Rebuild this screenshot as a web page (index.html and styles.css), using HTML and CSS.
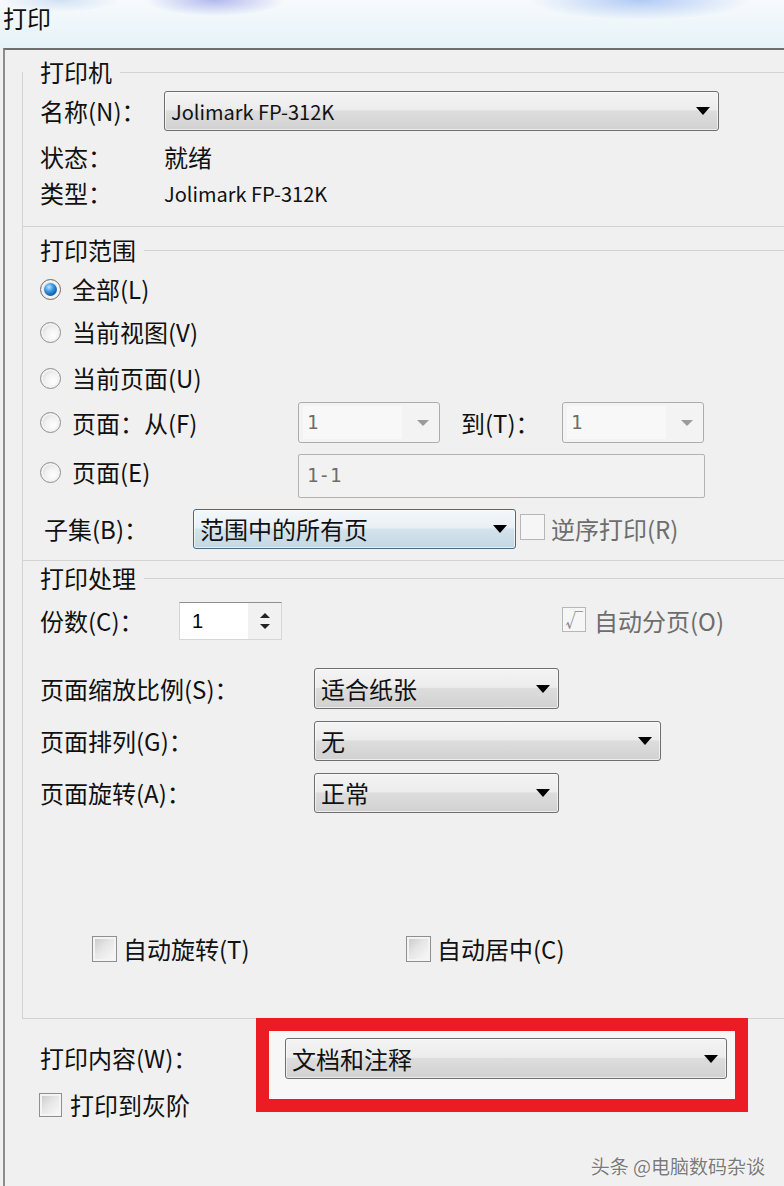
FILE: index.html
```html
<!DOCTYPE html>
<html lang="zh-CN">
<head>
    <meta charset="UTF-8">
    <title>打印</title>
    <link rel="stylesheet" href="styles.css">
</head>
<body>

<div class="titlebar">打印</div>

<div class="dialog">
    <div class="panel">

        <!-- 打印机 -->
        <div class="group group-printer">
            <div class="group-head first"><span>打印机</span></div>
            <div class="row row-name">
                <span class="label w-name">名称(N)：</span>
                <div class="combo combo-printer"><span class="latin">Jolimark FP-312K</span><i class="arrow"></i></div>
            </div>
            <div class="row row-info row-status">
                <span class="label w-name">状态：</span><span>就绪</span>
            </div>
            <div class="row row-info">
                <span class="label w-name">类型：</span><span class="latin">Jolimark FP-312K</span>
            </div>
        </div>

        <!-- 打印范围 -->
        <div class="group group-range">
            <div class="group-head"><span>打印范围</span></div>
            <div class="row range-all">
                <div class="radio-item"><span class="radio checked"><i></i></span><span>全部(L)</span></div>
            </div>
            <div class="row range-view">
                <div class="radio-item"><span class="radio"></span><span>当前视图(V)</span></div>
            </div>
            <div class="row range-current">
                <div class="radio-item"><span class="radio"></span><span>当前页面(U)</span></div>
            </div>
            <div class="row range-from">
                <div class="radio-item range-label"><span class="radio"></span><span>页面：从(F)</span></div>
                <div class="small-combo"><span class="field">1</span><i class="arrow small"></i></div>
                <span class="label w-to">到(T)：</span>
                <div class="small-combo"><span class="field">1</span><i class="arrow small"></i></div>
            </div>
            <div class="row range-pages">
                <div class="radio-item range-label up"><span class="radio"></span><span>页面(E)</span></div>
                <div class="textbox">1-1</div>
            </div>
            <div class="row range-subset">
                <span class="label w-subset">子集(B)：</span>
                <div class="combo combo-focus combo-subset"><span>范围中的所有页</span><i class="arrow"></i></div>
                <span class="check disabled"></span><span class="muted reverse">逆序打印(R)</span>
            </div>
        </div>

        <!-- 打印处理 -->
        <div class="group group-proc">
            <div class="group-head"><span>打印处理</span></div>
            <div class="row proc-copies">
                <span class="label w-copies">份数(C)：</span>
                <div class="spinner">
                    <span class="spin-field">1</span>
                    <span class="spin-btns"><i class="up"></i><i class="down"></i></span>
                </div>
                <span class="check disabled ticked">√</span><span class="muted collate">自动分页(O)</span>
            </div>
            <div class="row proc-scale">
                <span class="label w-proc">页面缩放比例(S)：</span>
                <div class="combo combo-short"><span>适合纸张</span><i class="arrow"></i></div>
            </div>
            <div class="row proc-order">
                <span class="label w-proc">页面排列(G)：</span>
                <div class="combo combo-wide"><span>无</span><i class="arrow"></i></div>
            </div>
            <div class="row proc-rotate">
                <span class="label w-proc">页面旋转(A)：</span>
                <div class="combo combo-short"><span>正常</span><i class="arrow"></i></div>
            </div>
            <div class="row proc-checks">
                <div class="check-item auto-rotate"><span class="check"></span><span>自动旋转(T)</span></div>
                <div class="check-item"><span class="check"></span><span>自动居中(C)</span></div>
            </div>
        </div>
    </div>

    <!-- 打印内容 -->
    <div class="bottom">
        <div class="bottom-left">
            <div class="content-label">打印内容(W)：</div>
            <div class="check-item gray-item"><span class="check"></span><span>打印到灰阶</span></div>
        </div>
        <div class="highlight">
            <div class="combo combo-content"><span>文档和注释</span><i class="arrow"></i></div>
        </div>
    </div>

    <div class="watermark">头条 @电脑数码杂谈</div>
</div>

</body>
</html>
```

FILE: styles.css
```css
* {
    box-sizing: border-box;
}
body {
    margin: 0;
    width: 784px;
    height: 1186px;
    overflow: hidden;
    background: #f0f0f0;
    font-family: "Noto Sans CJK SC", "Microsoft YaHei", sans-serif;
    font-size: 24px;
    line-height: 1.25;
    color: #111;
}
.titlebar {
    height: 48px;
    padding-left: 3px;
    line-height: 36px;
    background:
        radial-gradient(ellipse 70px 16px at 215px 0, rgba(140, 150, 230, 0.65), transparent),
        radial-gradient(ellipse 110px 20px at 640px 0, rgba(130, 170, 240, 0.6), transparent),
        radial-gradient(ellipse 60px 12px at 60px 0, rgba(170, 200, 235, 0.5), transparent),
        linear-gradient(#f7fafc, #e5f3f8);
}
.dialog {
    margin-left: 3px;
    height: 1138px;
    border-top: 2px solid #6f6f6f;
    border-left: 2px solid #8c8c8c;
    padding: 22px 0 0 17px;
}
.panel {
    display: flow-root;
    border-left: 1px solid #d3d3d3;
}
.group {
    display: flow-root;
    padding-left: 17px;
    border-bottom: 1px solid #d3d3d3;
}
.group-head {
    display: flex;
    align-items: center;
    height: 30px;
}
.group-head::after {
    content: "";
    flex: 1;
    height: 1px;
    margin-left: 8px;
    background: #d3d3d3;
}
.group-head.first {
    margin-top: -15px;
}
.row {
    display: flex;
    align-items: center;
}
.label {
    flex-shrink: 0;
}
.latin {
    font-size: 20px;
}
.muted {
    color: #6d6d6d;
}

/* printer */
.group-printer {
    padding-bottom: 15px;
}
.row-name {
    margin-top: 4px;
    height: 40px;
}
.row-info {
    height: 36px;
}
.row-status {
    margin-top: 8px;
}
.w-name {
    width: 124px;
}
.combo-printer {
    width: 555px;
}

/* range */
.group-range {
    padding-bottom: 11px;
}
.group-range .group-head {
    margin-top: 8px;
}
.range-all {
    margin-top: 4px;
    height: 40px;
}
.range-view {
    margin-top: 3px;
    height: 40px;
}
.range-current {
    margin-top: 6px;
    height: 40px;
}
.range-from {
    margin-top: 4px;
    height: 41px;
}
.range-pages {
    margin-top: 11px;
    height: 44px;
}
.range-subset {
    margin-top: 11px;
    height: 40px;
}
.radio-item {
    display: flex;
    align-items: center;
    gap: 11px;
}
.range-label {
    width: 258px;
}
.range-label.up {
    margin-top: -8px;
}
.radio {
    display: flex;
    align-items: center;
    justify-content: center;
    width: 21px;
    height: 21px;
    border-radius: 50%;
    border: 1px solid #8e8f8f;
    background: radial-gradient(circle at 65% 65%, #ffffff 0%, #f1f1f1 45%, #c9c9c9 100%);
    box-shadow: inset 0 0 0 2px #f3f3f3;
}
.radio.checked {
    border-color: #6f6a66;
}
.radio.checked i {
    width: 13px;
    height: 13px;
    border-radius: 50%;
    background: radial-gradient(circle at 38% 32%, #bfe6ff 0%, #3a9be6 35%, #135fae 70%, #0b3d78 100%);
}
.small-combo {
    display: flex;
    align-items: center;
    justify-content: space-between;
    width: 142px;
    height: 41px;
    padding: 3px 10px 3px 4px;
    border: 1px solid #acacac;
    border-radius: 3px;
    background: #f3f3f3;
}
.small-combo .field {
    width: 99px;
    height: 100%;
    padding-left: 4px;
    background: #f8f8f8;
    font-family: "DejaVu Sans Mono", monospace;
    font-size: 19px;
    line-height: 33px;
    color: #6d6d6d;
}
.w-to {
    width: 101px;
    margin-left: 21px;
}
.textbox {
    width: 407px;
    height: 44px;
    padding-left: 8px;
    border: 1px solid #b3b3b3;
    border-radius: 2px;
    background: #f2f2f2;
    font-family: "DejaVu Sans Mono", monospace;
    font-size: 19px;
    line-height: 40px;
    color: #6d6d6d;
}
.w-subset {
    width: 149px;
    margin-left: 4px;
}
.combo-subset {
    width: 323px;
}
.range-subset .check {
    margin-left: 4px;
    margin-top: -5px;
}
.reverse {
    margin-left: 6px;
}

/* combos */
.combo {
    display: flex;
    align-items: center;
    justify-content: space-between;
    flex-shrink: 0;
    height: 40px;
    padding: 0 8px 0 6px;
    border: 1px solid #6e6e6e;
    border-radius: 3px;
    background: linear-gradient(#f4f4f4, #ececec 47%, #dddddd 50%, #d1d1d1);
    box-shadow: inset 0 0 0 1px rgba(255, 255, 255, 0.6);
}
.combo-focus {
    border-color: #4b6a82;
    background: linear-gradient(#f3f7fa, #e9f0f4 47%, #d4e3ec 50%, #c3d7e3);
}
.arrow {
    width: 0;
    height: 0;
    border-left: 7px solid transparent;
    border-right: 7px solid transparent;
    border-top: 8px solid #000;
}
.arrow.small {
    border-left-width: 6px;
    border-right-width: 6px;
    border-top: 6px solid #9b9b9b;
}

/* checkboxes */
.check {
    display: flex;
    align-items: center;
    justify-content: center;
    flex-shrink: 0;
    width: 25px;
    height: 26px;
    border: 1px solid #8e8f8f;
    background: linear-gradient(135deg, #c6c6c6 0%, #e6e6e6 45%, #fbfbfb 100%);
    box-shadow: inset 0 0 0 2px #f4f4f4;
}
.check.disabled {
    border-color: #b7b7b7;
    background: #f6f6f6;
    box-shadow: none;
}
.check.ticked {
    width: 24px;
    height: 25px;
    font-size: 18px;
    color: #8a8a8a;
}
.check-item {
    display: flex;
    align-items: center;
    gap: 6px;
}

/* processing */
.group-proc {
    padding-bottom: 49px;
}
.group-proc .group-head {
    margin-top: 2px;
}
.proc-copies {
    margin-top: 9px;
    height: 38px;
}
.w-copies {
    width: 139px;
}
.spinner {
    display: flex;
    width: 103px;
    height: 38px;
    border: 1px solid #d6d6d6;
    border-top-color: #8f8f8f;
    background: #fff;
}
.spin-field {
    width: 68px;
    padding-left: 12px;
    line-height: 36px;
    font-family: "Liberation Sans", sans-serif;
    font-size: 20px;
    color: #000;
}
.spin-btns {
    display: flex;
    flex: 1;
    flex-direction: column;
    align-items: center;
    justify-content: center;
    gap: 6px;
    background: #f1f1f1;
}
.spin-btns .up {
    border-left: 5px solid transparent;
    border-right: 5px solid transparent;
    border-bottom: 5px solid #222;
}
.spin-btns .down {
    border-left: 5px solid transparent;
    border-right: 5px solid transparent;
    border-top: 5px solid #222;
}
.proc-copies .check {
    margin-left: 280px;
    margin-top: -3px;
}
.collate {
    margin-left: 8px;
}
.proc-scale {
    margin-top: 28px;
    height: 41px;
}
.proc-order {
    margin-top: 12px;
    height: 40px;
}
.proc-rotate {
    margin-top: 12px;
    height: 40px;
}
.w-proc {
    width: 274px;
}
.combo-short {
    width: 245px;
    height: 100%;
}
.combo-wide {
    width: 347px;
}
.proc-checks {
    margin-top: 116px;
    height: 40px;
    padding-left: 52px;
}
.auto-rotate {
    width: 314px;
}

/* bottom */
.bottom {
    display: flex;
    margin-top: -1px;
}
.bottom-left {
    width: 234px;
    padding-left: 18px;
}
.content-label {
    display: flex;
    align-items: center;
    height: 40px;
    margin-top: 20px;
}
.gray-item {
    height: 30px;
    margin-top: 12px;
    margin-left: -1px;
    gap: 8px;
}
.gray-item .check {
    width: 23px;
    height: 24px;
}
.highlight {
    width: 492px;
    height: 94px;
    padding: 7px 0 0 16px;
    border: 13px solid #ec1c24;
    background: #f7f7f7;
}
.combo-content {
    width: 442px;
    height: 41px;
}
.watermark {
    margin-top: 34px;
    padding-right: 19px;
    text-align: right;
    font-size: 19px;
    line-height: 24px;
    color: #7a7a7a;
    text-shadow: 0 0 2px #fff, 0 0 1px #fff;
}
```
